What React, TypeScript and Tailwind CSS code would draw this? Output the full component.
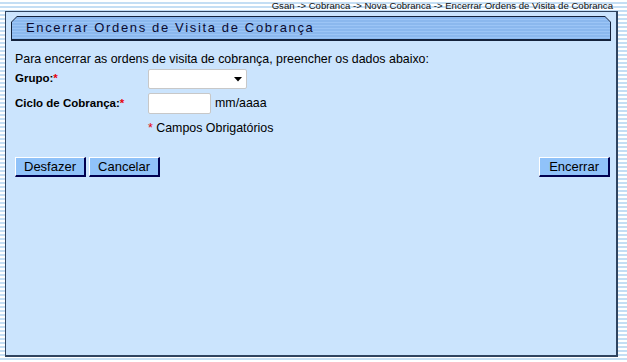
export default function App() {
  return (
    <div
      className="w-[627px] h-[362px] overflow-hidden bg-[repeating-linear-gradient(to_bottom,#ffffff_0px,#ffffff_2px,#c4def4_2px,#c4def4_4px)] font-['Liberation_Sans',Arial,sans-serif] text-black"
    >
      <div className="h-[11px] pr-[14px] text-right text-[9.6px] leading-[11px] text-[#111]">
        Gsan -&gt; Cobranca -&gt; Nova Cobranca -&gt; Encerrar Ordens de Visita de Cobranca
      </div>

      <div className="ml-[5px] w-[613px] h-[346px] border-l border-t border-r-2 border-b-2 border-[#2f4460] bg-[#cbe4fd] px-[5px] pt-[4px]">
        <div className="h-[25px] bg-[#14223c] [clip-path:polygon(6px_0,calc(100%-6px)_0,100%_6px,100%_100%,0_100%,0_6px)] p-[1px] pb-[2px]">
          <div className="h-full flex items-center pl-[14px] bg-[repeating-linear-gradient(to_bottom,#8bb8ee_0px,#8bb8ee_2px,#9cc5f6_2px,#9cc5f6_3px)] [clip-path:polygon(5px_0,calc(100%-5px)_0,100%_5px,100%_100%,0_100%,0_5px)]">
            <span className="text-[13px] tracking-[1.65px] text-[#0a0a30]">
              Encerrar Ordens de Visita de Cobrança
            </span>
          </div>
        </div>

        <div className="pl-[4px] pt-[11px] text-[12.4px]">
          <div className="leading-[14px]">
            Para encerrar as ordens de visita de cobrança, preencher os dados abaixo:
          </div>

          <div className="flex items-center mt-[3px] h-[20px]">
            <div className="w-[133px] font-bold text-[11.5px]">
              Grupo:<span className="text-red-600">*</span>
            </div>
            <div className="relative w-[99px] h-[20px] bg-white border border-[#c8c8c8] rounded-[2px]">
              <svg className="absolute right-[4px] top-[7px]" width="8" height="5" viewBox="0 0 8 5">
                <polygon points="0,0 8,0 4,4.5" fill="#000" />
              </svg>
            </div>
          </div>

          <div className="flex items-center mt-[4px] h-[21px]">
            <div className="w-[133px] font-bold text-[11.5px]">
              Ciclo de Cobrança:<span className="text-red-600">*</span>
            </div>
            <div className="w-[63px] h-[21px] bg-white border border-[#c8c8c8] rounded-[2px]" />
            <span className="ml-[4px]">mm/aaaa</span>
          </div>

          <div className="pl-[133px] mt-[7px] leading-[14px]">
            <span className="text-red-600">*</span> Campos Obrigatórios
          </div>

          <div className="flex items-center mt-[22px] pr-[1px]">
            <button className="h-[20px] px-[8px] text-[13px] bg-[#90c2f9] border border-t-white border-l-white border-r-2 border-b-2 border-r-[#000050] border-b-[#000050] leading-none">
              Desfazer
            </button>
            <button className="ml-[3px] h-[20px] px-[8px] text-[13px] bg-[#90c2f9] border border-t-white border-l-white border-r-2 border-b-2 border-r-[#000050] border-b-[#000050] leading-none">
              Cancelar
            </button>
            <div className="flex-1" />
            <button className="h-[20px] px-[9px] text-[13px] bg-[#90c2f9] border border-t-white border-l-white border-r-2 border-b-2 border-r-[#000050] border-b-[#000050] leading-none">
              Encerrar
            </button>
          </div>
        </div>
      </div>
    </div>
  );
}
